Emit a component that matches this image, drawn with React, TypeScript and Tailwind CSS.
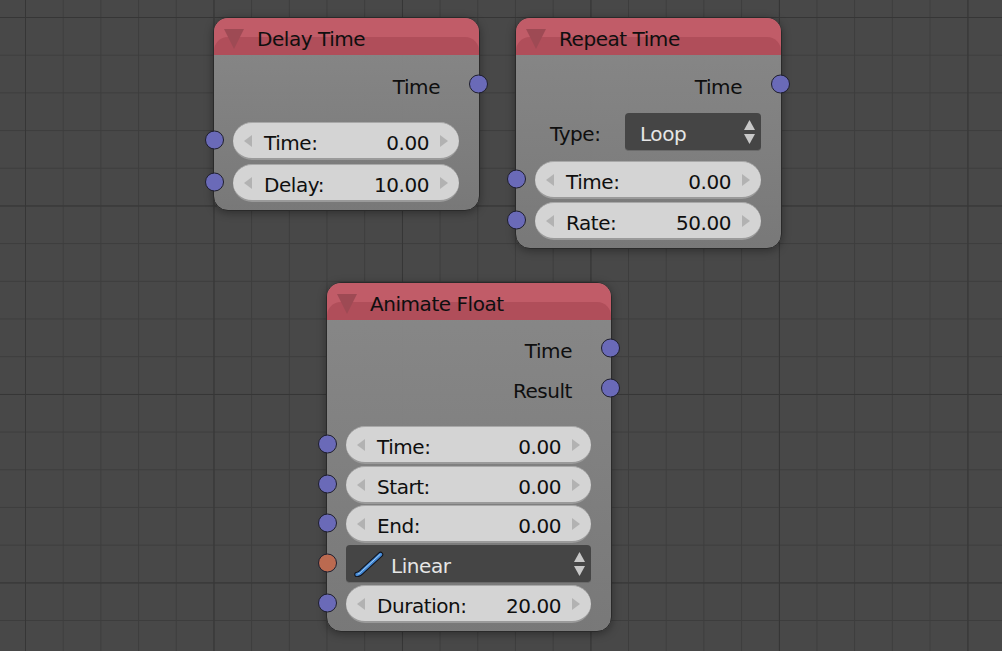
import type { ReactNode } from "react";

const ui = "font-['DejaVu_Sans',sans-serif] text-[20px] leading-none tracking-[-0.45px]";

function Socket({ orange }: { orange?: boolean }) {
	return (
		<span
			className={`absolute left-[-28px] top-1/2 h-[19px] w-[19px] -translate-y-[calc(50%+1px)] rounded-full border border-[#1e1e2e] ${
				orange ? "bg-[#bb6a50]" : "bg-[#6a6ab8]"
			}`}
		/>
	);
}

function Arrow({ dir }: { dir: "left" | "right" }) {
	return (
		<svg width="8" height="12" viewBox="0 0 8 12" className="shrink-0">
			<path
				d={dir === "left" ? "M8 0V12L0 6Z" : "M0 0V12L8 6Z"}
				fill="#b2b2b2"
			/>
		</svg>
	);
}

function Field({
	label,
	value,
	className,
}: {
	label: string;
	value: string;
	className?: string;
}) {
	return (
		<div
			className={`relative flex h-[38px] items-center rounded-full border-b-2 border-b-[#9a9a9a] border-t border-t-[#a8a8a8] bg-[#d4d4d4] pl-[11px] pr-[11px] text-[#0f0f0f] ${className ?? ""}`}
		>
			<Socket />
			<Arrow dir="left" />
			<span className="ml-[12px] pt-[4px]">{label}</span>
			<span className="ml-auto mr-[11px] pt-[4px]">{value}</span>
			<Arrow dir="right" />
		</div>
	);
}

function Updown() {
	return (
		<svg width="11" height="24" viewBox="0 0 11 24" className="shrink-0">
			<path d="M5.5 0L11 10H0Z" fill="#c8c8c8" />
			<path d="M0 14H11L5.5 24Z" fill="#c8c8c8" />
		</svg>
	);
}

function Dropdown({
	value,
	socket,
	icon,
	className,
}: {
	value: string;
	socket?: boolean;
	icon?: ReactNode;
	className?: string;
}) {
	return (
		<div
			className={`relative flex h-[38px] items-center rounded-[4px] border-b border-b-[#6a6a6a] bg-[#454545] pr-[6px] text-[#e6e6e6] ${className ?? ""}`}
		>
			{socket && <Socket orange />}
			{icon}
			<span className={`pt-[5px] ${icon ? "ml-[7px]" : "ml-[15px]"}`}>{value}</span>
			<span className="ml-auto flex">
				<Updown />
			</span>
		</div>
	);
}

function Output({ label }: { label: string }) {
	return (
		<div className="relative flex h-[40px] items-center justify-end pr-[39px] pt-[8px] text-[#0f0f0f]">
			<span>{label}</span>
			<span className="absolute right-[-9px] top-1/2 h-[19px] w-[19px] -translate-y-[calc(50%-1px)] rounded-full border border-[#1e1e2e] bg-[#6a6ab8]" />
		</div>
	);
}

function Node({
	title,
	className,
	children,
}: {
	title: string;
	className: string;
	children: ReactNode;
}) {
	return (
		<div
			className={`absolute rounded-[15px] border border-[#2a2a2a] bg-[linear-gradient(180deg,rgba(138,138,138,0.97),rgba(122,122,122,0.97))] shadow-[0_2px_8px_rgba(0,0,0,0.35)] ${ui} ${className}`}
		>
			<div className="relative flex h-[37px] items-center overflow-hidden rounded-t-[14px] bg-[#c15c68] text-[#0f0f0f]">
				<div className="absolute inset-x-0 bottom-0 h-[18px] rounded-t-[14px] bg-[#b04e5a]" />
				<svg
					width="20"
					height="20"
					viewBox="0 0 20 20"
					className="relative ml-[10px] mt-[4px]"
				>
					<path d="M0 0H20L10 20Z" fill="#9e4a54" />
				</svg>
				<span className="relative ml-[13px] pt-[5px]">{title}</span>
			</div>
			{children}
		</div>
	);
}

export default function App() {
	return (
		<div className="relative h-[651px] w-[1002px] overflow-hidden bg-[#484848] [background-image:linear-gradient(90deg,#363636_1px,transparent_1px),linear-gradient(180deg,#363636_1px,transparent_1px),linear-gradient(90deg,#3d3d3d_1px,transparent_1px),linear-gradient(180deg,#3d3d3d_1px,transparent_1px)] [background-position:25px_17px,25px_17px,25px_17px,25px_17px] [background-size:188.5px_188.5px,188.5px_188.5px,37.7px_37.7px,37.7px_37.7px]">
			<Node title="Delay Time" className="left-[213px] top-[17px] h-[194px] w-[267px]">
				<div className="pt-[8px]">
					<Output label="Time" />
				</div>
				<div className="mt-[19px] flex flex-col gap-[4px] pl-[19px] pr-[20px]">
					<Field label="Time:" value="0.00" />
					<Field label="Delay:" value="10.00" />
				</div>
			</Node>

			<Node title="Repeat Time" className="left-[515px] top-[17px] h-[232px] w-[267px]">
				<div className="pt-[8px]">
					<Output label="Time" />
				</div>
				<div className="mt-[10px] flex flex-col gap-[3px] pl-[19px] pr-[20px]">
					<div className="mb-[7px] flex items-center text-[#0f0f0f]">
						<span className="ml-[15px] pt-[3px]">Type:</span>
						<Dropdown value="Loop" className="ml-auto w-[136px]" />
					</div>
					<Field label="Time:" value="0.00" />
					<Field label="Rate:" value="50.00" />
				</div>
			</Node>

			<Node title="Animate Float" className="left-[326px] top-[282px] h-[350px] w-[286px]">
				<div className="pt-[7px]">
					<Output label="Time" />
					<Output label="Result" />
				</div>
				<div className="mt-[19px] flex flex-col gap-[2px] pl-[19px] pr-[20px]">
					<Field label="Time:" value="0.00" />
					<Field label="Start:" value="0.00" />
					<Field label="End:" value="0.00" className="mt-[-1px]" />
					<Dropdown
						value="Linear"
						socket
						icon={
							<svg width="30" height="26" viewBox="0 0 30 26" className="ml-[8px] shrink-0">
								<path d="M3 23.5C5.5 23.5 6.5 22 8.5 20L26.5 3.5" stroke="#10131c" strokeWidth="5.5" fill="none" strokeLinecap="round" />
								<path d="M3 23.5C5.5 23.5 6.5 22 8.5 20L26.5 3.5" stroke="#4287d4" strokeWidth="3.5" fill="none" strokeLinecap="round" />
								<path d="M4 23C6 22.5 7 21 8.5 19.5L26 3.5" stroke="#a4d0f6" strokeWidth="1" fill="none" strokeLinecap="round" />
							</svg>
						}
					/>
					<Field label="Duration:" value="20.00" />
				</div>
			</Node>
		</div>
	);
}
